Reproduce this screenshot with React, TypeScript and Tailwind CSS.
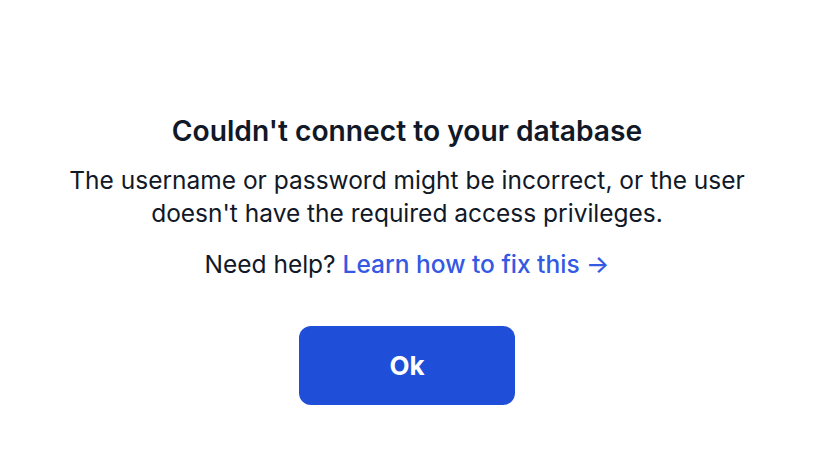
import React from "react";

function App() {
  return (
    <div
      className="flex h-[466px] w-full justify-center bg-white pt-[113px]"
      style={{ fontFamily: "Inter, 'Noto Sans', sans-serif" }}
    >
      <div className="flex flex-col items-center text-center">
        <h1 className="text-[28.2px] font-semibold leading-[36px] text-[#111827]">
          Couldn't connect to your database
        </h1>
        <p className="mt-[15px] max-w-[720px] text-[24.5px] leading-[33px] text-[#111827]">
          The username or password might be incorrect, or the user
          <br />
          doesn't have the required access privileges.
        </p>
        <p className="mt-[18px] text-[24.5px] leading-[33px] text-[#111827]">
          Need help?{" "}
          <a href="#" className="font-medium text-[#3459e3]">
            Learn how to fix this →
          </a>
        </p>
        <button
          type="button"
          className="mt-[45px] h-[79px] w-[216px] rounded-xl bg-[#1f4fd8] text-[26px] font-bold text-white"
        >
          Ok
        </button>
      </div>
    </div>
  );
}

export default App;
